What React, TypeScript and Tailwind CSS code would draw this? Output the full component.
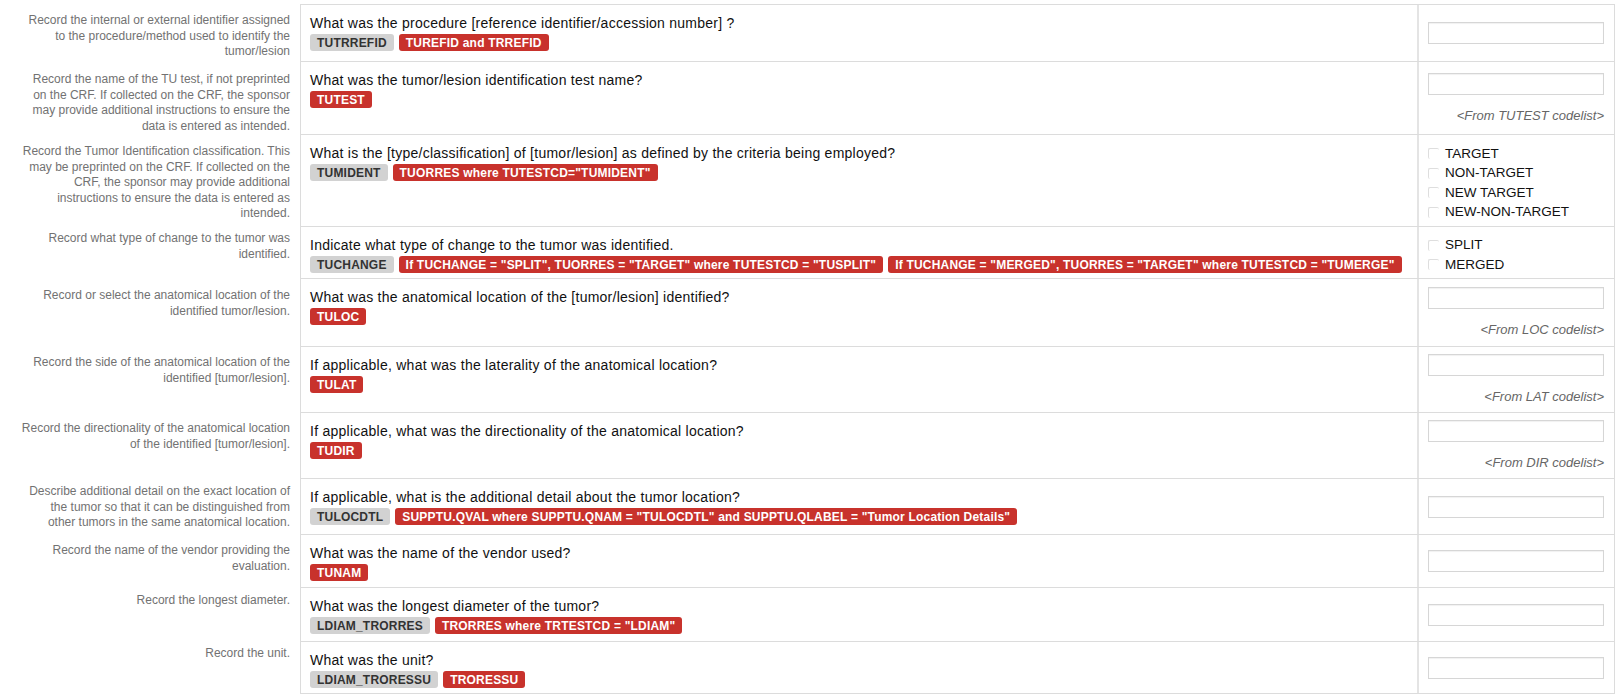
import React from "react";

type Badge = { t: string; red?: boolean };
type Row = {
  h: string;
  dpt: string;
  desc: string[];
  q: string;
  badges: Badge[];
  input?: boolean;
  codelist?: string;
  options?: string[];
};

const rows: Row[] = [
  {
    h: "h-[58px]",
    dpt: "pt-[9px]",
    desc: [
      "Record the internal or external identifier assigned",
      "to the procedure/method used to identify the",
      "tumor/lesion",
    ],
    q: "What was the procedure [reference identifier/accession number] ?",
    badges: [{ t: "TUTRREFID" }, { t: "TUREFID and TRREFID", red: true }],
    input: true,
  },
  {
    h: "h-[73px]",
    dpt: "pt-[10px]",
    desc: [
      "Record the name of the TU test, if not preprinted",
      "on the CRF. If collected on the CRF, the sponsor",
      "may provide additional instructions to ensure the",
      "data is entered as intended.",
    ],
    q: "What was the tumor/lesion identification test name?",
    badges: [{ t: "TUTEST", red: true }],
    input: true,
    codelist: "<From TUTEST codelist>",
  },
  {
    h: "h-[92px]",
    dpt: "pt-[9px]",
    desc: [
      "Record the Tumor Identification classification. This",
      "may be preprinted on the CRF. If collected on the",
      "CRF, the sponsor may provide additional",
      "instructions to ensure the data is entered as",
      "intended.",
    ],
    q: "What is the [type/classification] of [tumor/lesion] as defined by the criteria being employed?",
    badges: [{ t: "TUMIDENT" }, { t: 'TUORRES where TUTESTCD="TUMIDENT"', red: true }],
    options: ["TARGET", "NON-TARGET", "NEW TARGET", "NEW-NON-TARGET"],
  },
  {
    h: "h-[52px]",
    dpt: "pt-[4px]",
    desc: ["Record what type of change to the tumor was", "identified."],
    q: "Indicate what type of change to the tumor was identified.",
    badges: [
      { t: "TUCHANGE" },
      { t: 'If TUCHANGE = "SPLIT", TUORRES = "TARGET" where TUTESTCD = "TUSPLIT"', red: true },
      { t: 'If TUCHANGE = "MERGED", TUORRES = "TARGET" where TUTESTCD = "TUMERGE"', red: true },
    ],
    options: ["SPLIT", "MERGED"],
  },
  {
    h: "h-[68px]",
    dpt: "pt-[9px]",
    desc: ["Record or select the anatomical location of the", "identified tumor/lesion."],
    q: "What was the anatomical location of the [tumor/lesion] identified?",
    badges: [{ t: "TULOC", red: true }],
    input: true,
    codelist: "<From LOC codelist>",
  },
  {
    h: "h-[66px]",
    dpt: "pt-[8px]",
    desc: ["Record the side of the anatomical location of the", "identified [tumor/lesion]."],
    q: "If applicable, what was the laterality of the anatomical location?",
    badges: [{ t: "TULAT", red: true }],
    input: true,
    codelist: "<From LAT codelist>",
  },
  {
    h: "h-[66px]",
    dpt: "pt-[8px]",
    desc: ["Record the directionality of the anatomical location", "of the identified [tumor/lesion]."],
    q: "If applicable, what was the directionality of the anatomical location?",
    badges: [{ t: "TUDIR", red: true }],
    input: true,
    codelist: "<From DIR codelist>",
  },
  {
    h: "h-[56px]",
    dpt: "pt-[5px]",
    desc: [
      "Describe additional detail on the exact location of",
      "the tumor so that it can be distinguished from",
      "other tumors in the same anatomical location.",
    ],
    q: "If applicable, what is the additional detail about the tumor location?",
    badges: [
      { t: "TULOCDTL" },
      { t: 'SUPPTU.QVAL where SUPPTU.QNAM = "TULOCDTL" and SUPPTU.QLABEL = "Tumor Location Details"', red: true },
    ],
    input: true,
  },
  {
    h: "h-[53px]",
    dpt: "pt-[8px]",
    desc: ["Record the name of the vendor providing the", "evaluation."],
    q: "What was the name of the vendor used?",
    badges: [{ t: "TUNAM", red: true }],
    input: true,
  },
  {
    h: "h-[54px]",
    dpt: "pt-[5px]",
    desc: ["Record the longest diameter."],
    q: "What was the longest diameter of the tumor?",
    badges: [{ t: "LDIAM_TRORRES" }, { t: 'TRORRES where TRTESTCD = "LDIAM"', red: true }],
    input: true,
  },
  {
    h: "h-[52px]",
    dpt: "pt-[4px]",
    desc: ["Record the unit."],
    q: "What was the unit?",
    badges: [{ t: "LDIAM_TRORESSU" }, { t: "TRORESSU", red: true }],
    input: true,
  },
];

function BadgeEl({ b }: { b: Badge }) {
  return (
    <span
      className={
        b.red
          ? "inline-flex h-[17px] items-center rounded-[3px] bg-[#c8322c] px-[7px] text-[12px] font-bold leading-none tracking-[0.2px] text-white whitespace-nowrap"
          : "inline-flex h-[17px] items-center rounded-[3px] bg-[#d2d2d2] px-[7px] text-[12px] font-bold leading-none tracking-[0.2px] text-[#333] whitespace-nowrap"
      }
    >
      {b.t}
    </span>
  );
}

export default function App() {
  return (
    <div className="w-[1618px] bg-white pt-[4px] font-['Liberation_Sans',Arial,sans-serif]">
      {rows.map((r, i) => (
        <div key={i} className={"flex " + r.h}>
          <div
            className={
              "w-[300px] shrink-0 whitespace-nowrap pr-[10px] text-right text-[12px] leading-[15.5px] text-[#727272] " +
              r.dpt
            }
          >
            {r.desc.map((l, j) => (
              <div key={j}>{l}</div>
            ))}
          </div>
          <div
            className={
              i === 0
                ? "flex w-[1315px] shrink-0 border border-[#dcdcdc]"
                : "flex w-[1315px] shrink-0 border-x border-b border-[#dcdcdc]"
            }
          >
            <div className="w-[1116px] shrink-0 px-[9px] pt-[8px]">
              <div className="text-[14px] leading-[21px] tracking-[0.25px] text-[#111]">{r.q}</div>
              <div className="flex gap-[5px]">
                {r.badges.map((b, k) => (
                  <BadgeEl key={k} b={b} />
                ))}
              </div>
            </div>
            <div className="flex flex-1 flex-col justify-center border-l-2 border-[#e4e4e4] pl-[9px] pr-[10px]">
              {r.input && (
                <div className="h-[22px] w-[176px] border border-[#d6d6d6] bg-white shadow-[inset_0_1px_1px_rgba(0,0,0,0.06)]" />
              )}
              {r.codelist && (
                <div className="mt-[13px] text-right text-[13px] italic leading-[16px] text-[#666]">{r.codelist}</div>
              )}
              {r.options && (
                <div className="mt-[5px] flex flex-col">
                  {r.options.map((o, k) => (
                    <div key={k} className="flex h-[19.5px] items-center gap-[6px] text-[13.5px] text-[#111]">
                      <span className="h-[11px] w-[11px] rounded-[2px] border-l border-t border-[#dedede]" />
                      {o}
                    </div>
                  ))}
                </div>
              )}
            </div>
          </div>
        </div>
      ))}
    </div>
  );
}
